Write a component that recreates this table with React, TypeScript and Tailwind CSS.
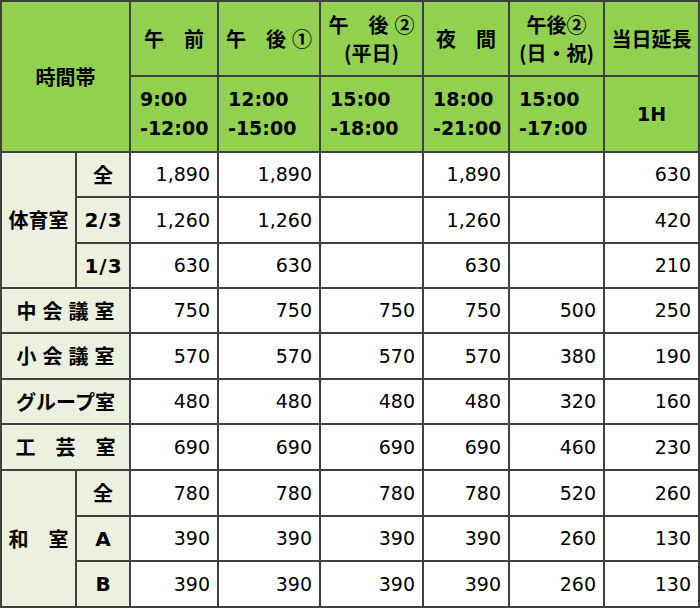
const JP = "font-['Noto_Sans_CJK_JP',sans-serif] font-bold text-[20px]";
const NUM = "font-['DejaVu_Sans','Noto_Sans_CJK_JP',sans-serif]";
const CELL = 'border-r-2 border-b-2 border-[#404040] flex items-center';
const HEAD = 'bg-[#92d050]';
const LABEL = 'bg-[#ebf1de]';

type Row = { sub?: string; label?: string; vals: string[] };

const rows: Row[] = [
  { sub: '全', vals: ['1,890', '1,890', '', '1,890', '', '630'] },
  { sub: '2/3', vals: ['1,260', '1,260', '', '1,260', '', '420'] },
  { sub: '1/3', vals: ['630', '630', '', '630', '', '210'] },
  { label: '中会議室', vals: ['750', '750', '750', '750', '500', '250'] },
  { label: '小会議室', vals: ['570', '570', '570', '570', '380', '190'] },
  { label: 'グループ室', vals: ['480', '480', '480', '480', '320', '160'] },
  { label: '工　芸　室', vals: ['690', '690', '690', '690', '460', '230'] },
  { sub: '全', vals: ['780', '780', '780', '780', '520', '260'] },
  { sub: 'A', vals: ['390', '390', '390', '390', '260', '130'] },
  { sub: 'B', vals: ['390', '390', '390', '390', '260', '130'] },
];

const times = [
  ['9:00', '-12:00'],
  ['12:00', '-15:00'],
  ['15:00', '-18:00'],
  ['18:00', '-21:00'],
  ['15:00', '-17:00'],
];

function SubLabel({ text }: { text: string }) {
  const isJp = text === '全';
  return (
    <div className={`${CELL} ${LABEL} justify-center`}>
      <span className={isJp ? JP : `${NUM} font-bold text-[20px] tracking-[1px] pl-[1px]`}>{text}</span>
    </div>
  );
}

export default function App() {
  return (
    <div className="w-[700px] h-[608px] bg-white">
      <div className="grid grid-cols-[75px_54px_88px_102px_103px_86px_95px_95px] grid-rows-[75px_76px_45px_46px_45px_45px_46px_45px_46px_46px_45px_46px] border-l-2 border-t-2 border-[#404040] text-black">
        {/* header */}
        <div className={`${CELL} ${HEAD} col-span-2 row-span-2 justify-center`}>
          <span className={JP}>時間帯</span>
        </div>
        <div className={`${CELL} ${HEAD} justify-center`}>
          <span className={JP}>午　前</span>
        </div>
        <div className={`${CELL} ${HEAD} justify-center`}>
          <span className={JP}>
            午　後<span className="ml-[6px]">①</span>
          </span>
        </div>
        <div className={`${CELL} ${HEAD} justify-center`}>
          <span className={`${JP} text-center leading-[28px]`}>
            午　後<span className="ml-[6px]">②</span>
            <br />
            (平日)
          </span>
        </div>
        <div className={`${CELL} ${HEAD} justify-center`}>
          <span className={JP}>夜　間</span>
        </div>
        <div className={`${CELL} ${HEAD} justify-center`}>
          <span className={`${JP} text-center leading-[28px]`}>
            午後②
            <br />
            (日・祝)
          </span>
        </div>
        <div className={`${CELL} ${HEAD} justify-center`}>
          <span className={JP}>当日延長</span>
        </div>

        {times.map(([a, b], i) => (
          <div key={i} className={`${CELL} ${HEAD} pl-[9px]`}>
            <span className={`${NUM} font-bold text-[19px] leading-[29px]`}>
              {a}
              <br />
              {b}
            </span>
          </div>
        ))}
        <div className={`${CELL} ${HEAD} justify-center`}>
          <span className={`${NUM} font-bold text-[19px]`}>1H</span>
        </div>

        {/* body */}
        {rows.map((r, i) => (
          <Body key={i} index={i} row={r} />
        ))}
      </div>
    </div>
  );
}

function Body({ row, index }: { row: Row; index: number }) {
  return (
    <>
      {index === 0 && (
        <div className={`${CELL} ${LABEL} row-span-3 justify-center`}>
          <span className={JP}>体育室</span>
        </div>
      )}
      {index === 7 && (
        <div className={`${CELL} ${LABEL} row-span-3 justify-center`}>
          <span className={JP}>和　室</span>
        </div>
      )}
      {row.label ? (
        <div className={`${CELL} ${LABEL} col-span-2 justify-center`}>
          <span className={`${JP} ${row.label.length === 4 ? 'tracking-[6px] pl-[6px]' : ''}`}>
            {row.label}
          </span>
        </div>
      ) : (
        <SubLabel text={row.sub ?? ''} />
      )}
      {row.vals.map((v, j) => (
        <div key={j} className={`${CELL} justify-end pr-[7px]`}>
          <span className={`${NUM} text-[19px]`}>{v}</span>
        </div>
      ))}
    </>
  );
}
